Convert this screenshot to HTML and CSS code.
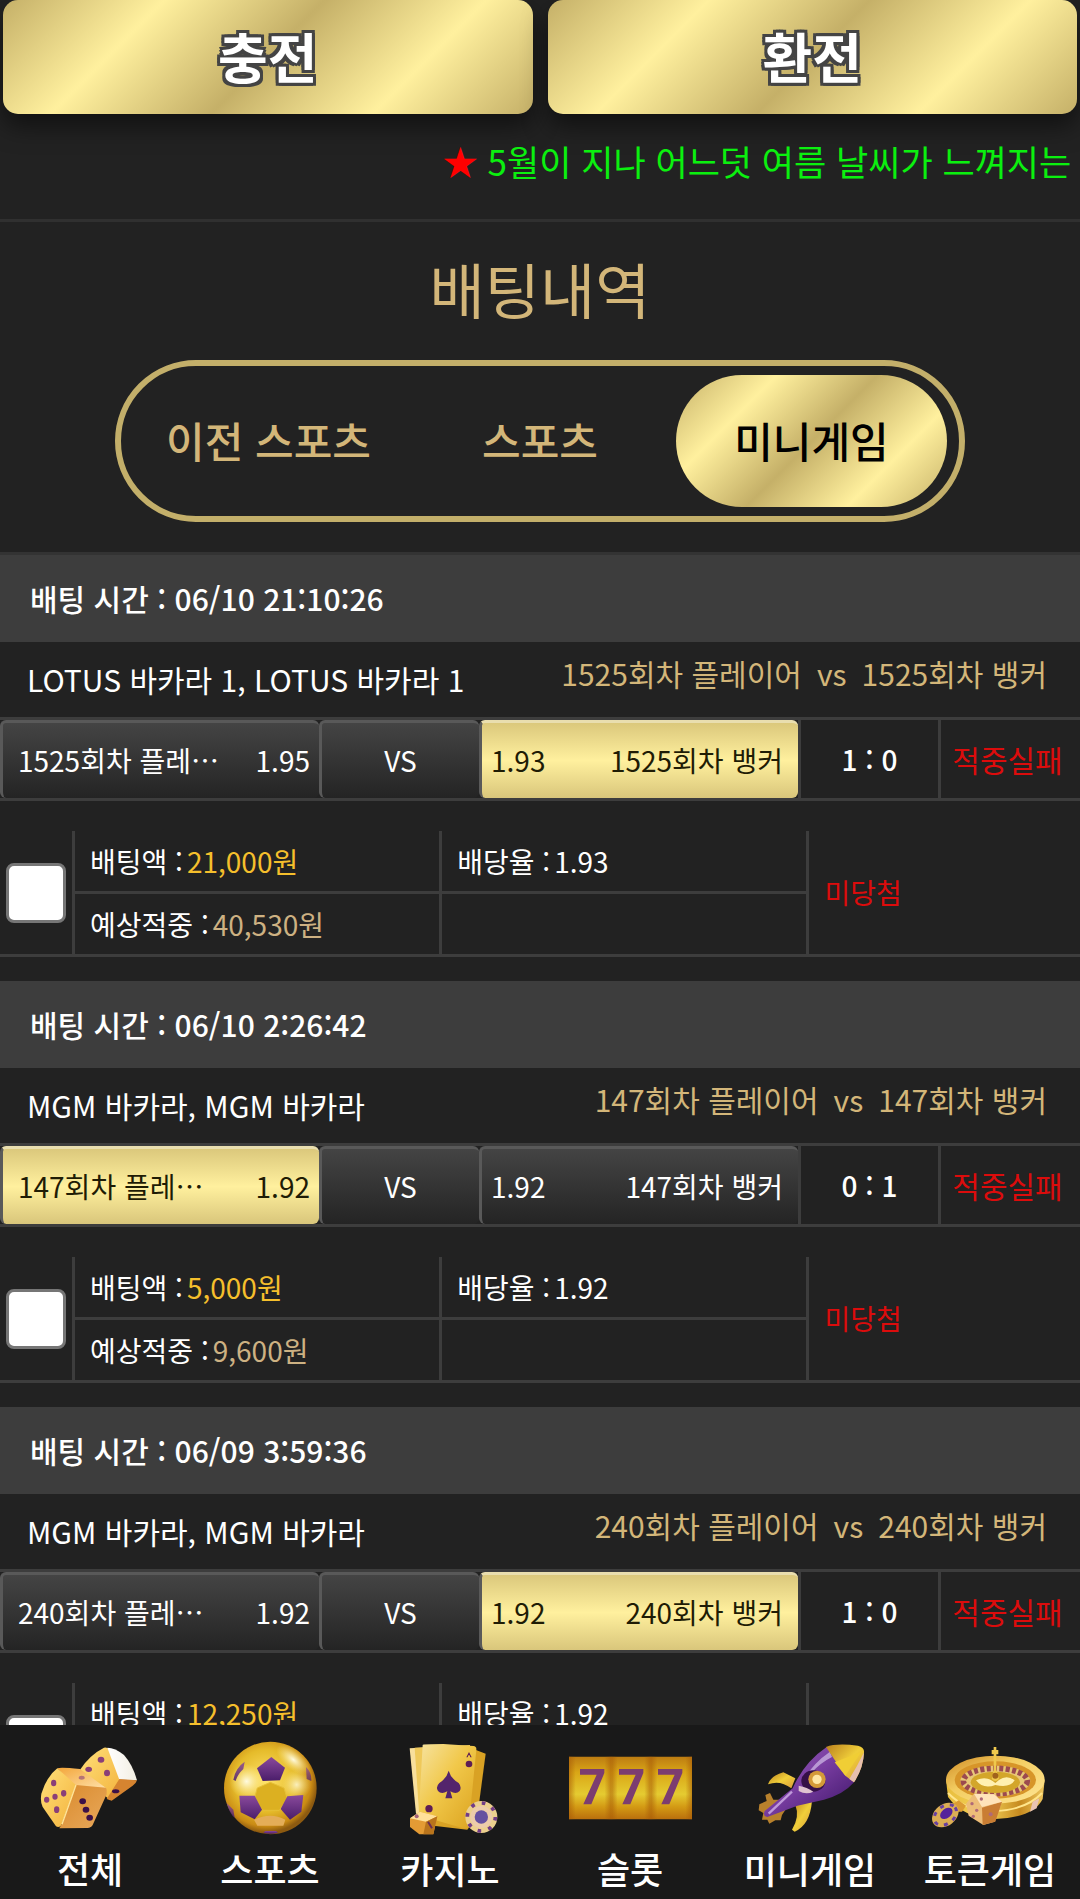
FILE: index.html
```html
<!DOCTYPE html>
<html lang="ko">
<head>
<meta charset="utf-8">
<meta name="viewport" content="width=device-width, initial-scale=1">
<title>배팅내역</title>
<link rel="stylesheet" href="styles.css">
</head>
<body>
<div class="app">
  <main class="content">
    <div class="wallet">
      <button class="wallet-btn gold" type="button">충전</button>
      <button class="wallet-btn gold" type="button">환전</button>
    </div>
    <p class="notice"><span class="star">★</span> 5월이 지나 어느덧 여름 날씨가 느껴지는</p>

    <section class="heading">
      <h1>배팅내역</h1>
      <div class="tabs">
        <button class="tab" type="button">이전 스포츠</button>
        <button class="tab" type="button">스포츠</button>
        <button class="tab active gold" type="button">미니게임</button>
      </div>
    </section>

    <article class="bet">
      <h2 class="bet-time">배팅 시간 : 06/10 21:10:26</h2>
      <div class="match"><span>LOTUS 바카라 1, LOTUS 바카라 1</span><span class="teams"><span>1525회차 플레이어</span><span>vs</span><span>1525회차 뱅커</span></span></div>
      <div class="odds">
        <div class="pick"><span class="name">1525회차 플레이어</span><span>1.95</span></div>
        <div class="pick versus">VS</div>
        <div class="pick away chosen"><span>1.93</span><span>1525회차 뱅커</span></div>
        <div class="score">1 : 0</div>
        <div class="result">적중실패</div>
      </div>
      <table class="detail">
        <colgroup><col class="c-check"><col class="c-info"><col class="c-info"><col class="c-state"></colgroup>
        <tr>
          <td class="check" rowspan="2"><input type="checkbox" aria-label="06/10 21:10:26 배팅 선택"></td>
          <td class="line">배팅액 :<span class="amount stake">21,000원</span></td>
          <td class="line">배당율 :<span class="amount">1.93</span></td>
          <td class="state" rowspan="2">미당첨</td>
        </tr>
        <tr><td>예상적중 :<span class="amount payout">40,530원</span></td><td></td></tr>
      </table>
    </article>

    <article class="bet">
      <h2 class="bet-time">배팅 시간 : 06/10 2:26:42</h2>
      <div class="match"><span>MGM 바카라, MGM 바카라</span><span class="teams"><span>147회차 플레이어</span><span>vs</span><span>147회차 뱅커</span></span></div>
      <div class="odds">
        <div class="pick chosen"><span class="name">147회차 플레이어</span><span>1.92</span></div>
        <div class="pick versus">VS</div>
        <div class="pick away"><span>1.92</span><span>147회차 뱅커</span></div>
        <div class="score">0 : 1</div>
        <div class="result">적중실패</div>
      </div>
      <table class="detail">
        <colgroup><col class="c-check"><col class="c-info"><col class="c-info"><col class="c-state"></colgroup>
        <tr>
          <td class="check" rowspan="2"><input type="checkbox" aria-label="06/10 2:26:42 배팅 선택"></td>
          <td class="line">배팅액 :<span class="amount stake">5,000원</span></td>
          <td class="line">배당율 :<span class="amount">1.92</span></td>
          <td class="state" rowspan="2">미당첨</td>
        </tr>
        <tr><td>예상적중 :<span class="amount payout">9,600원</span></td><td></td></tr>
      </table>
    </article>

    <article class="bet">
      <h2 class="bet-time">배팅 시간 : 06/09 3:59:36</h2>
      <div class="match"><span>MGM 바카라, MGM 바카라</span><span class="teams"><span>240회차 플레이어</span><span>vs</span><span>240회차 뱅커</span></span></div>
      <div class="odds">
        <div class="pick"><span class="name">240회차 플레이어</span><span>1.92</span></div>
        <div class="pick versus">VS</div>
        <div class="pick away chosen"><span>1.92</span><span>240회차 뱅커</span></div>
        <div class="score">1 : 0</div>
        <div class="result">적중실패</div>
      </div>
      <table class="detail">
        <colgroup><col class="c-check"><col class="c-info"><col class="c-info"><col class="c-state"></colgroup>
        <tr>
          <td class="check" rowspan="2"><input type="checkbox" aria-label="06/09 3:59:36 배팅 선택"></td>
          <td class="line">배팅액 :<span class="amount stake">12,250원</span></td>
          <td class="line">배당율 :<span class="amount">1.92</span></td>
          <td class="state" rowspan="2"></td>
        </tr>
        <tr><td></td><td></td></tr>
      </table>
    </article>
  </main>

  <nav class="dock">
    <a href="#all">
      <svg viewBox="81 58 378 288" aria-hidden="true">
        <defs>
          <linearGradient id="d1" x1="0" y1="0" x2="1" y2="1"><stop offset="0" stop-color="#ffe07a"/><stop offset="1" stop-color="#f3b23c"/></linearGradient>
          <linearGradient id="d2" x1="0" y1="0" x2="1" y2="1"><stop offset="0" stop-color="#d98a2c"/><stop offset="1" stop-color="#e9a95c"/></linearGradient>
          <linearGradient id="d3" x1="0" y1="0" x2="1" y2="1"><stop offset="0" stop-color="#f3a63a"/><stop offset="1" stop-color="#ffe0a8"/></linearGradient>
          <linearGradient id="d4" x1="0" y1="0" x2="1" y2="0"><stop offset="0" stop-color="#fff"/><stop offset="1" stop-color="#f2eee2"/></linearGradient>
        </defs>
        <path d="M240 150 Q270 105 312 84 Q322 82 328 90 L362 180 L330 242 L300 215Z" fill="url(#d1)"/>
        <path d="M322 84 Q345 84 372 106 Q398 135 411 182 L358 180Z" fill="url(#d4)"/>
        <path d="M358 178 L411 182 Q408 192 398 198 L335 243 L320 238Z" fill="#d68430"/>
        <path d="M172 146 Q180 142 240 148 L318 205 L220 200Z" fill="url(#d3)"/>
        <path d="M172 146 L228 196 L186 312 Q180 326 168 320 L128 262 Q120 246 124 222 Q140 170 172 146Z" fill="url(#d1)"/>
        <path d="M228 196 L318 204 Q322 210 320 224 L278 316 Q274 324 262 325 L178 326 L188 308Z" fill="url(#d2)"/>
        <path d="M228 196 L186 314" stroke="#ffe59a" stroke-width="4"/>
        <g fill="#8a3f78"><ellipse cx="303" cy="120" rx="10" ry="9"/><ellipse cx="266" cy="149" rx="10" ry="8"/><ellipse cx="321" cy="160" rx="9" ry="10"/><ellipse cx="161" cy="190" rx="8" ry="10"/><ellipse cx="191" cy="221" rx="8" ry="10"/><ellipse cx="165" cy="231" rx="8" ry="9"/><ellipse cx="140" cy="240" rx="8" ry="9"/><ellipse cx="170" cy="270" rx="8" ry="10"/><ellipse cx="245" cy="174" rx="9" ry="6" opacity=".6"/></g>
        <g fill="#3d1148"><ellipse cx="248" cy="245" rx="10" ry="9"/><ellipse cx="258" cy="270" rx="10" ry="9"/><ellipse cx="269" cy="294" rx="10" ry="9"/><ellipse cx="347" cy="215" rx="11" ry="6"/></g>
      </svg>
      <span>전체</span>
    </a>
    <a href="#sports">
      <svg viewBox="621 58 378 288" aria-hidden="true">
        <defs>
          <radialGradient id="b1" cx=".45" cy=".42" r=".56"><stop offset="0" stop-color="#ffe36a"/><stop offset=".6" stop-color="#e5bb2a"/><stop offset=".88" stop-color="#c98a14"/><stop offset="1" stop-color="#8d5a10"/></radialGradient>
          <linearGradient id="b2" x1="0" y1="0" x2="0" y2="1"><stop offset="0" stop-color="#8a4a9c"/><stop offset="1" stop-color="#4a1d6a"/></linearGradient>
          <radialGradient id="b3"><stop offset="0" stop-color="#fffbe0"/><stop offset="1" stop-color="#ffe98a" stop-opacity="0"/></radialGradient>
        </defs>
        <circle cx="811" cy="205" r="139" fill="url(#b1)"/>
        <circle cx="740" cy="185" r="52" fill="url(#b3)"/>
        <ellipse cx="880" cy="120" rx="62" ry="30" transform="rotate(40 880 120)" fill="url(#b3)"/>
        <circle cx="890" cy="195" r="44" fill="url(#b3)" opacity=".8"/>
        <path d="M762 300 Q812 276 856 300 L850 318 H772Z" fill="#e4ad58"/>
        <path d="M811 188 L852 205 L862 238 L838 272 H788 L762 240 L772 205Z" fill="#dcb021" stroke="#e6c038" stroke-width="3"/>
        <g fill="url(#b2)"><path d="M814 112 L855 144 L840 182 L788 184 L771 146Z"/><path d="M718 228 L764 228 L786 270 L764 299 L722 278Z"/><path d="M862 230 L910 226 L904 276 L870 300 L842 268Z"/><path d="M700 180 Q706 145 734 126 L730 148 Q712 165 707 184Z" opacity=".85"/><path d="M918 142 Q936 160 934 184 L920 178Z" opacity=".7"/><path d="M680 250 Q690 285 704 294 L700 270Z" opacity=".8"/><path d="M790 339 Q812 345 834 339 L828 334H796Z"/></g>
      </svg>
      <span>스포츠</span>
    </a>
    <a href="#casino">
      <svg viewBox="81 58 378 288" aria-hidden="true">
        <defs>
          <linearGradient id="c1" x1="0" y1="0" x2="1" y2="1"><stop offset="0" stop-color="#f6e3a0"/><stop offset=".45" stop-color="#f1c84a"/><stop offset="1" stop-color="#dba21e"/></linearGradient>
        </defs>
        <path d="M340 88 L377 102 L352 290 L322 330 L220 318Z" fill="#d9a224"/>
        <path d="M149 86 L260 80 L300 300 L168 282Z" fill="#f8df9c"/>
        <path d="M164 84 L330 76 L320 318 L178 290Z" fill="#efc95a"/>
        <path d="M188 76 Q186 73 250 73 L340 79 Q350 80 349 90 L326 320 Q324 328 310 326 L186 290 Q176 286 177 270Z" fill="url(#c1)"/>
        <path d="M266 153 Q272 176 296 190 Q306 202 299 214 Q288 226 271 215 L277 236 H256 L262 215 Q244 226 234 214 Q226 202 238 190 Q260 176 266 153Z" fill="#54246c"/>
        <g fill="#5d1d55"><circle cx="327" cy="133" r="10"/><path d="M319 113 L327 97 L335 113 L331 113 L329 107 H325 L323 113Z"/><circle cx="207" cy="267" r="11"/></g>
        <path d="M150 296 L180 276 L232 290 L220 344 L178 344 L150 322Z" fill="#e49b34"/><path d="M150 296 L180 276 L232 290 L198 306Z" fill="#ffe09a"/><path d="M198 306 L232 290 L220 344 L190 344Z" fill="#b9741c"/><path d="M204 306 L216 326" stroke="#6b2e52" stroke-width="6"/><circle cx="170" cy="290" r="6" fill="#a36178"/>
        <circle cx="364" cy="292" r="48" fill="#ecd08e"/><circle cx="364" cy="292" r="42" fill="none" stroke="#713c86" stroke-width="11" stroke-dasharray="11 22"/><circle cx="364" cy="292" r="33" fill="#ecccaa"/><circle cx="364" cy="292" r="20" fill="#6550a0"/>
      </svg>
      <span>카지노</span>
    </a>
    <a href="#slot">
      <svg viewBox="621 58 378 288" aria-hidden="true">
        <defs>
          <linearGradient id="s1" x1="0" y1="0" x2="0" y2="1"><stop offset="0" stop-color="#bd7c12"/><stop offset=".25" stop-color="#d9a616"/><stop offset=".6" stop-color="#e5cb31"/><stop offset=".8" stop-color="#d39a14"/><stop offset="1" stop-color="#b96f0d"/></linearGradient>
          <linearGradient id="s2"><stop offset="0" stop-color="#a85b07" stop-opacity=".6"/><stop offset=".16" stop-color="#a85b07" stop-opacity="0"/><stop offset=".84" stop-color="#a85b07" stop-opacity="0"/><stop offset="1" stop-color="#a85b07" stop-opacity=".6"/></linearGradient>
        </defs>
        <path d="M627 111H996V299H627Z" fill="url(#s1)"/>
        <path d="M627 111H754V299H627Z" fill="url(#s2)"/><path d="M754 111H872V299H754Z" fill="url(#s2)"/><path d="M872 111H996V299H872Z" fill="url(#s2)"/>
        <g fill="#7c3d70"><path d="M660 148H733V160L694 254H670L710 165H660Z"/><path d="M777 148H850V160L811 254H787L827 165H777Z"/><path d="M894 148H967V160L928 254H904L944 165H894Z"/></g>
      </svg>
      <span>슬롯</span>
    </a>
    <a href="#mini">
      <svg viewBox="81 58 378 288" aria-hidden="true">
        <defs>
          <linearGradient id="r1" x1="0" y1="0" x2="1" y2="1"><stop offset=".1" stop-color="#8d5bb4"/><stop offset=".45" stop-color="#7a3ea2"/><stop offset="1" stop-color="#3c1467"/></linearGradient>
          <linearGradient id="r2" x1="0" y1="0" x2="1" y2="1"><stop offset="0" stop-color="#b97f1d"/><stop offset=".5" stop-color="#f0cf3a"/><stop offset="1" stop-color="#d7983a"/></linearGradient>
        </defs>
        <path d="M214 206 Q180 180 144 194 Q152 168 190 158 L226 176Z" fill="url(#r2)"/>
        <path d="M226 256 Q240 290 216 330 L224 336 Q270 316 276 244Z" fill="url(#r2)"/>
        <path d="M178 240 L160 240 L150 220 L136 226 L140 244 L118 254 L116 272 L130 280 L126 300 L142 300 L148 312 L166 302 L182 302 L186 286 L206 256Z" fill="#b8812c"/>
        <path d="M320 82 L402 188 Q370 225 312 240 L232 258 L142 292 Q128 290 134 274 L218 206 Q252 128 320 82Z" fill="url(#r1)"/>
        <path d="M330 96 Q280 130 252 178 L274 160 Q300 130 336 112Z" fill="#d9c7ee" opacity=".65"/>
        <path d="M216 216 L146 282" stroke="#c09ada" stroke-width="7"/>
        <path d="M318 82 Q348 70 414 78 Q434 84 432 98 Q430 146 402 188 L376 168Z" fill="url(#r2)"/>
        <path d="M432 98 Q430 146 402 188 L388 178 Q412 140 432 98Z" fill="#e7bfae"/>
        <path d="M344 128 L424 96 L376 168Z" fill="#f0ce35"/>
        <ellipse cx="280" cy="184" rx="36" ry="32" fill="#351047"/><circle cx="291" cy="179" r="26" fill="#d49a38"/><circle cx="291" cy="179" r="14" fill="#ffe7a4"/>
        <path d="M236 198 Q262 202 280 216 Q258 226 236 214Z" fill="#dfc3d0"/>
      </svg>
      <span>미니게임</span>
    </a>
    <a href="#token">
      <svg viewBox="621 58 378 288" aria-hidden="true">
        <defs>
          <linearGradient id="t1"><stop offset="0" stop-color="#e8bd3c"/><stop offset=".4" stop-color="#f4d35a"/><stop offset=".75" stop-color="#c68a1f"/><stop offset="1" stop-color="#efc860"/></linearGradient>
          <linearGradient id="t2" x1="0" y1="0" x2="1" y2="1"><stop offset="0" stop-color="#cf8a24"/><stop offset=".4" stop-color="#f3cd61"/><stop offset="1" stop-color="#ffe695"/></linearGradient>
        </defs>
        <path d="M678 180 L684 232 Q730 296 826 298 Q940 294 968 238 L974 180Z" fill="url(#t1)"/>
        <ellipse cx="826" cy="180" rx="148" ry="72" fill="url(#t2)"/>
        <ellipse cx="826" cy="181" rx="122" ry="56" fill="#d79529"/>
        <ellipse cx="826" cy="184" rx="105" ry="46" fill="#e8c777"/>
        <ellipse cx="826" cy="184" rx="96" ry="38" fill="none" stroke="#9c4a4f" stroke-width="17" stroke-dasharray="12 7"/>
        <ellipse cx="826" cy="188" rx="74" ry="32" fill="#d3a62a"/>
        <path d="M768 182 Q800 166 826 190 Q856 160 884 182 Q870 206 826 196 Q790 210 768 182Z" fill="#fff0b0"/>
        <path d="M821 110 V104 H815 V91 H821 V82 H829 V91 H835 V104 H829 V150 L837 178 Q826 190 815 178 L821 150Z" fill="#efc94d"/><circle cx="826" cy="168" r="9" fill="#a0621b"/>
        <path d="M684 220 Q740 278 826 274 Q920 270 966 220" fill="none" stroke="#ffe58b" stroke-width="6"/>
        <path d="M938 246 L958 236 L950 266 L930 276Z" fill="#e9c3b3"/>
        <path d="M762 222 L826 224 L846 248 L824 306 L790 316 L746 288 L738 252Z" fill="#edbd78"/><path d="M786 264 L846 246 L826 306 L788 316Z" fill="#c97d33"/><path d="M762 222 L822 224 L846 246 L786 262Z" fill="#ffe3b9"/>
        <g fill="#b06a78"><circle cx="756" cy="252" r="5"/><circle cx="770" cy="272" r="5"/><circle cx="760" cy="290" r="5"/><circle cx="784" cy="238" r="5"/><circle cx="812" cy="284" r="6"/></g>
        <path d="M700 252 L716 242 L738 258 L726 276 L706 276Z" fill="#db9b33"/>
        <ellipse cx="676" cy="286" rx="44" ry="32" transform="rotate(-38 676 286)" fill="#dcae54"/><ellipse cx="676" cy="286" rx="37" ry="26" transform="rotate(-38 676 286)" fill="none" stroke="#6840a0" stroke-width="9" stroke-dasharray="12 18"/><ellipse cx="679" cy="281" rx="21" ry="14" transform="rotate(-38 679 281)" fill="#55229b"/>
      </svg>
      <span>토큰게임</span>
    </a>
  </nav>
</div>
</body>
</html>
```
FILE: styles.css
```css
* { box-sizing: border-box; }

body {
  margin: 0;
  background: #222;
  color: #fff;
  font-family: "Noto Sans CJK KR", "Noto Sans", sans-serif;
  font-size: 30px;
  line-height: 45px;
}

button {
  border: 0;
  background: none;
  padding: 0;
  font-family: inherit;
  cursor: pointer;
}

h1, h2, p { margin: 0; font-weight: 400; }

.app {
  display: flex;
  flex-direction: column;
  height: 100vh;
}

.content {
  flex: 1;
  min-height: 0;
  overflow-y: auto;
  overflow-x: hidden;
  scrollbar-width: none;
}

.gold {
  background: linear-gradient(135deg, #c5b068, #fff09e 25%, #c5b068 50%, #fff09e 75%, #c5b068);
}

/* deposit / withdraw */
.wallet {
  display: grid;
  grid-template-columns: 1fr 1fr;
  gap: 15px;
  padding: 0 3px;
}

.wallet-btn {
  height: 114px;
  padding-bottom: 3px;
  border-radius: 15px;
  box-shadow: 0 12px 24px rgba(0, 0, 0, .5);
  color: #fff;
  font-size: 54px;
  font-weight: 700;
  line-height: 78px;
  text-shadow: -3px 0 #444, 3px 0 #444, 0 -3px #444, 0 3px #444,
    -3px -3px #444, 3px -3px #444, -3px 3px #444, 3px 3px #444;
}

.notice {
  padding: 20px 0 31px 41%;
  border-bottom: 3px solid #303030;
  color: #0bf00f;
  font-size: 35px;
  line-height: 54px;
  white-space: nowrap;
  overflow: hidden;
}

.star { color: #f00; }

/* page title and tabs */
.heading {
  padding: 22px 11% 30px;
  border-bottom: 3px solid #333;
}

h1 {
  color: #d3b679;
  font-size: 60px;
  line-height: 87px;
  text-align: center;
  padding-bottom: 29px;
}

.tabs {
  display: grid;
  grid-template-columns: repeat(3, 1fr);
  margin: 0 -4px;
  padding: 9px 12px;
  border: 6px solid #c3af6a;
  border-radius: 81px;
}

.tab {
  height: 132px;
  padding-bottom: 4px;
  border-radius: 66px;
  color: #d3b679;
  font-size: 42px;
  font-weight: 500;
}

.tab.active { color: #000; }

/* one bet slip */
.bet { padding-bottom: 24px; }

.bet-time {
  padding: 21px 30px;
  background: #3d3d3d;
  font-size: 30px;
  font-weight: 500;
}

.match {
  display: flex;
  justify-content: space-between;
  padding: 15px 33px 15px 27px;
}

.teams {
  display: flex;
  gap: 15px;
  margin-top: -6px;
  color: #d3b679;
  white-space: nowrap;
}

.odds {
  display: grid;
  grid-template-columns: 319fr 160fr 319fr 140fr 142fr;
  height: 84px;
  border: solid #3d3d3d;
  border-width: 3px 0;
}

.pick {
  display: flex;
  align-items: center;
  justify-content: space-between;
  min-width: 0;
  padding: 0 9px 0 15px;
  border: solid #595959;
  border-width: 3px 0 0 3px;
  border-radius: 6px;
  background: linear-gradient(#444, #242424);
  font-size: 28px;
  white-space: nowrap;
}

.pick.versus { justify-content: center; padding: 0; }

.pick.away { padding: 0 15px 0 9px; }

.pick.chosen {
  border-top-color: #e9deaf;
  background: linear-gradient(#dbc87c, #fff09e 50%, #d9c67b);
  color: #1f1c05;
}

.name {
  width: 206px;
  overflow: hidden;
  text-overflow: ellipsis;
}

.score, .result {
  display: flex;
  align-items: center;
  justify-content: center;
  border-left: 3px solid #3d3d3d;
}

.score { font-size: 28px; font-weight: 500; }

.result { padding-right: 6px; color: #dc0c0c; }

.detail {
  width: 100%;
  margin-top: 30px;
  table-layout: fixed;
  border-collapse: separate;
  border-spacing: 0;
  border-bottom: 3px solid #3d3d3d;
  font-size: 28px;
}

.c-check { width: 72px; }
.c-info { width: 34%; }

.detail td {
  height: 60px;
  padding: 0 0 0 15px;
  border-left: 3px solid #3d3d3d;
}

.detail .line { height: 63px; border-bottom: 3px solid #3d3d3d; }

.detail .check {
  padding: 0 6px;
  border-left: 0;
  line-height: 0;
}

.check input {
  appearance: none;
  width: 60px;
  height: 60px;
  margin: 0;
  border: 3px solid #767676;
  border-radius: 8px;
  background: #fff;
}

.amount { margin-left: 4px; }
.stake { color: #f5bf2c; }
.payout { color: #cdb182; }
.detail .state { color: #dc0c0c; }

/* bottom navigation */
.dock {
  display: grid;
  grid-template-columns: repeat(6, 1fr);
  padding: 14px 0 5px;
  background: #191919;
}

.dock a {
  display: flex;
  flex-direction: column;
  align-items: center;
  gap: 7px;
  color: #fff;
  font-size: 36px;
  font-weight: 500;
  line-height: 52px;
  text-decoration: none;
  white-space: nowrap;
}

.dock svg { display: block; width: 126px; height: 96px; }
```
